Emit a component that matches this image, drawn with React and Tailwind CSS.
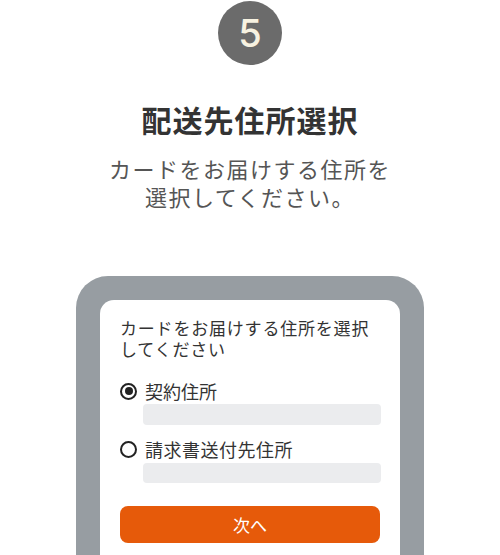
export default function App() {
  const jp = { fontFamily: '"Noto Sans CJK JP", "Noto Sans", sans-serif' };
  return (
    <div className="w-[500px] h-[555px] overflow-hidden bg-white flex flex-col items-center" style={jp}>
      <div className="mt-[1px] w-16 h-16 rounded-full bg-[#6b6b6b] flex items-center justify-center">
        <span className="text-[38px] leading-none text-[#f7f2e1] font-['Inter',sans-serif] font-medium">5</span>
      </div>
      <h1 className="mt-[34px] text-[30px] leading-[40px] font-bold text-[#333333] tracking-[1px]">配送先住所選択</h1>
      <p className="mt-[15px] text-[22px] leading-[28px] text-[#555555] text-center tracking-[1.5px]">
        カードをお届けする住所を
        <br />
        選択してください。
      </p>
      <div className="mt-[66px] w-[348px] flex-1 bg-[#979da2] rounded-t-[32px] pt-6 px-6">
        <div className="h-full bg-white rounded-t-[14px] px-5 pt-[17px]">
          <p className="text-[17px] leading-[21px] text-[#333333] tracking-[0.8px]">
            カードをお届けする住所を選択してください
          </p>
          <div className="mt-[20px] flex items-center h-6 gap-[8px]">
            <span className="w-[17px] h-[17px] rounded-full border-2 border-[#222222] flex items-center justify-center">
              <span className="w-[8px] h-[8px] rounded-full bg-[#222222]" />
            </span>
            <span className="text-[18px] leading-6 text-[#333333]">契約住所</span>
          </div>
          <div className="mt-[1px] ml-[23px] mr-[-1px] h-[21px] rounded-[4px] bg-[#ebecee]" />
          <div className="mt-[12px] flex items-center h-6 gap-[8px]">
            <span className="w-[17px] h-[17px] rounded-full border-2 border-[#222222]" />
            <span className="text-[18px] leading-6 text-[#333333] tracking-[0.5px]">請求書送付先住所</span>
          </div>
          <div className="mt-[2px] ml-[23px] mr-[-1px] h-[20px] rounded-[4px] bg-[#ebecee]" />
          <button className="mt-[23px] w-full h-[37px] rounded-[8px] bg-[#e65a0a] text-white text-[17px] flex items-center justify-center">
            次へ
          </button>
        </div>
      </div>
    </div>
  );
}
